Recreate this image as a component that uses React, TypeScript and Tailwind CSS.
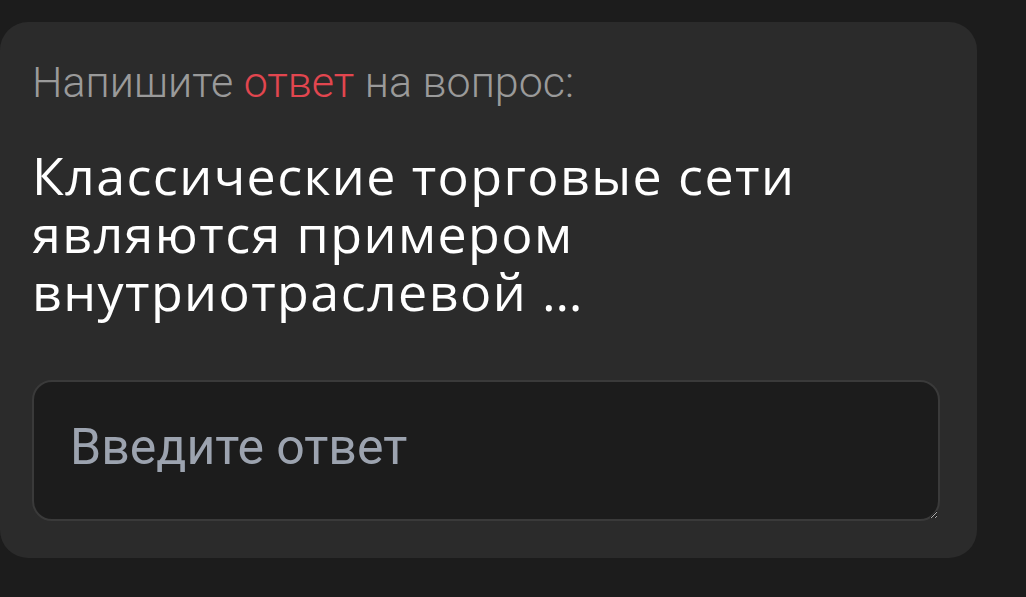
export default function App() {
  return (
    <div className="min-h-[597px] w-full bg-[#1c1c1c] pt-[22px] pr-[49px]">
      <div className="rounded-[28px] bg-[#2b2b2b] px-8 pt-[35px] pb-[37px]">
        <p className="font-['Roboto',sans-serif] text-[43px] font-light leading-[50px] text-[#9a9a9a]">
          Напишите <span className="text-[#e2464f]">ответ</span> на вопрос:
        </p>

        <h2 className="mt-[39px] font-['Open_Sans',sans-serif] text-[52px] font-medium leading-[58px] tracking-[1.4px] text-white">
          Классические торговые сети
          <br />
          являются примером
          <br />
          внутриотраслевой …
        </h2>

        <textarea
          placeholder="Введите ответ"
          className="mt-[60px] block h-[141px] w-[908px] rounded-[20px] border-2 border-[#3a3a3a] bg-[#1c1c1c] px-[36px] pt-[36px] font-['Roboto',sans-serif] text-[50px] leading-[58px] text-white outline-none placeholder:text-[#9ca3af]"
        />
      </div>
    </div>
  );
}
